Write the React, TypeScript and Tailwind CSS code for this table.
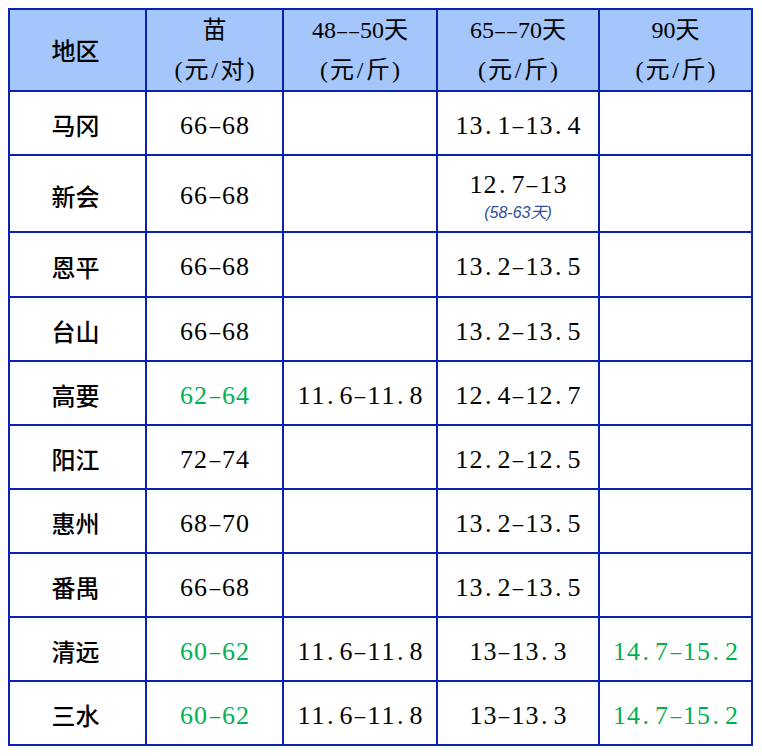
import React from "react";

const SERIF = '"Liberation Serif", "Noto Sans CJK SC", serif';

// every char sits in a fixed cell, like the half-width/full-width grid of SimSun
function Mono({ text, unit }: { text: string; unit: number }) {
  return (
    <span className="inline-flex items-baseline" style={{ fontFamily: SERIF }}>
      {Array.from(text).map((ch, i) => {
        const wide = ch.charCodeAt(0) > 0x2e80;
        const w = wide ? unit * 2 : unit;
        if (ch === ".") {
          return (
            <span key={i} className="inline-block text-left pl-[2px]" style={{ width: w }}>
              .
            </span>
          );
        }
        if (ch === "-") {
          return (
            <span key={i} className="inline-block text-center scale-x-[0.8]" style={{ width: w }}>
              –
            </span>
          );
        }
        return (
          <span key={i} className="inline-block text-center" style={{ width: w }}>
            {ch}
          </span>
        );
      })}
    </span>
  );
}

type Row = {
  area: string;
  seed: string;
  d48: string;
  d65: string;
  d90: string;
  green?: boolean;
  note?: string;
  h: string;
};

const rows: Row[] = [
  { area: "马冈", seed: "66-68", d48: "", d65: "13.1-13.4", d90: "", h: "h-[62px]" },
  { area: "新会", seed: "66-68", d48: "", d65: "12.7-13", d90: "", note: "(58-63天)", h: "h-[75px]" },
  { area: "恩平", seed: "66-68", d48: "", d65: "13.2-13.5", d90: "", h: "h-[63px]" },
  { area: "台山", seed: "66-68", d48: "", d65: "13.2-13.5", d90: "", h: "h-[62px]" },
  { area: "高要", seed: "62-64", d48: "11.6-11.8", d65: "12.4-12.7", d90: "", green: true, h: "h-[62px]" },
  { area: "阳江", seed: "72-74", d48: "", d65: "12.2-12.5", d90: "", h: "h-[62px]" },
  { area: "惠州", seed: "68-70", d48: "", d65: "13.2-13.5", d90: "", h: "h-[62px]" },
  { area: "番禺", seed: "66-68", d48: "", d65: "13.2-13.5", d90: "", h: "h-[62px]" },
  { area: "清远", seed: "60-62", d48: "11.6-11.8", d65: "13-13.3", d90: "14.7-15.2", green: true, h: "h-[62px]" },
  { area: "三水", seed: "60-62", d48: "11.6-11.8", d65: "13-13.3", d90: "14.7-15.2", green: true, h: "h-[62px]" },
];

function Head({ top, bottom }: { top?: string; bottom?: string }) {
  return (
    <div className="bg-[#a4c6fa] flex flex-col items-center justify-center text-[24px] leading-[40px] text-black">
      {top && <Mono text={top} unit={12} />}
      {bottom && <Mono text={bottom} unit={12} />}
    </div>
  );
}

function Cell({ children, className = "" }: { children?: React.ReactNode; className?: string }) {
  return (
    <div className={"bg-white flex flex-col items-center justify-center " + className}>
      {children}
    </div>
  );
}

export default function App() {
  return (
    <div className="w-[762px] h-[756px] bg-white pt-[8px] pl-[8px] text-black" style={{ fontFamily: SERIF }}>
      <div className="inline-grid grid-cols-[135px_135px_152px_160px_151px] gap-[2px] p-[2px] bg-[#0a22b0]">
        {/* header */}
        <div className="bg-[#a4c6fa] h-[80px] flex items-center justify-center text-[24px] font-['Noto_Sans_CJK_SC',sans-serif] font-medium">
          <span className="pr-[4px]">地区</span>
        </div>
        <Head top="苗" bottom="(元/对)" />
        <Head top="48--50天" bottom="(元/斤)" />
        <Head top="65--70天" bottom="(元/斤)" />
        <Head top="90天" bottom="(元/斤)" />

        {rows.map((r) => (
          <React.Fragment key={r.area}>
            <Cell className={r.h + " text-[24px] pt-[4px] pr-[4px] font-['Noto_Sans_CJK_SC',sans-serif] font-medium"}>
              {r.area}
            </Cell>
            <Cell className={"text-[26px] pt-[4px] " + (r.green ? "text-[#00b050]" : "")}>
              <Mono text={r.seed} unit={14} />
            </Cell>
            <Cell className="text-[26px] pt-[4px]">{r.d48 && <Mono text={r.d48} unit={14} />}</Cell>
            <Cell className="text-[26px] pt-[4px]">
              {r.note ? (
                <>
                  <div className="leading-[30px]">
                    <Mono text={r.d65} unit={14} />
                  </div>
                  <div className="text-[16px] italic text-[#2f4f9e] leading-[18px] mt-[4px] font-['Liberation_Sans','Noto_Sans_CJK_SC',sans-serif]">
                    {r.note}
                  </div>
                </>
              ) : (
                <Mono text={r.d65} unit={14} />
              )}
            </Cell>
            <Cell className={"text-[26px] pt-[4px] " + (r.green ? "text-[#00b050]" : "")}>
              {r.d90 && <Mono text={r.d90} unit={14} />}
            </Cell>
          </React.Fragment>
        ))}
      </div>
    </div>
  );
}
